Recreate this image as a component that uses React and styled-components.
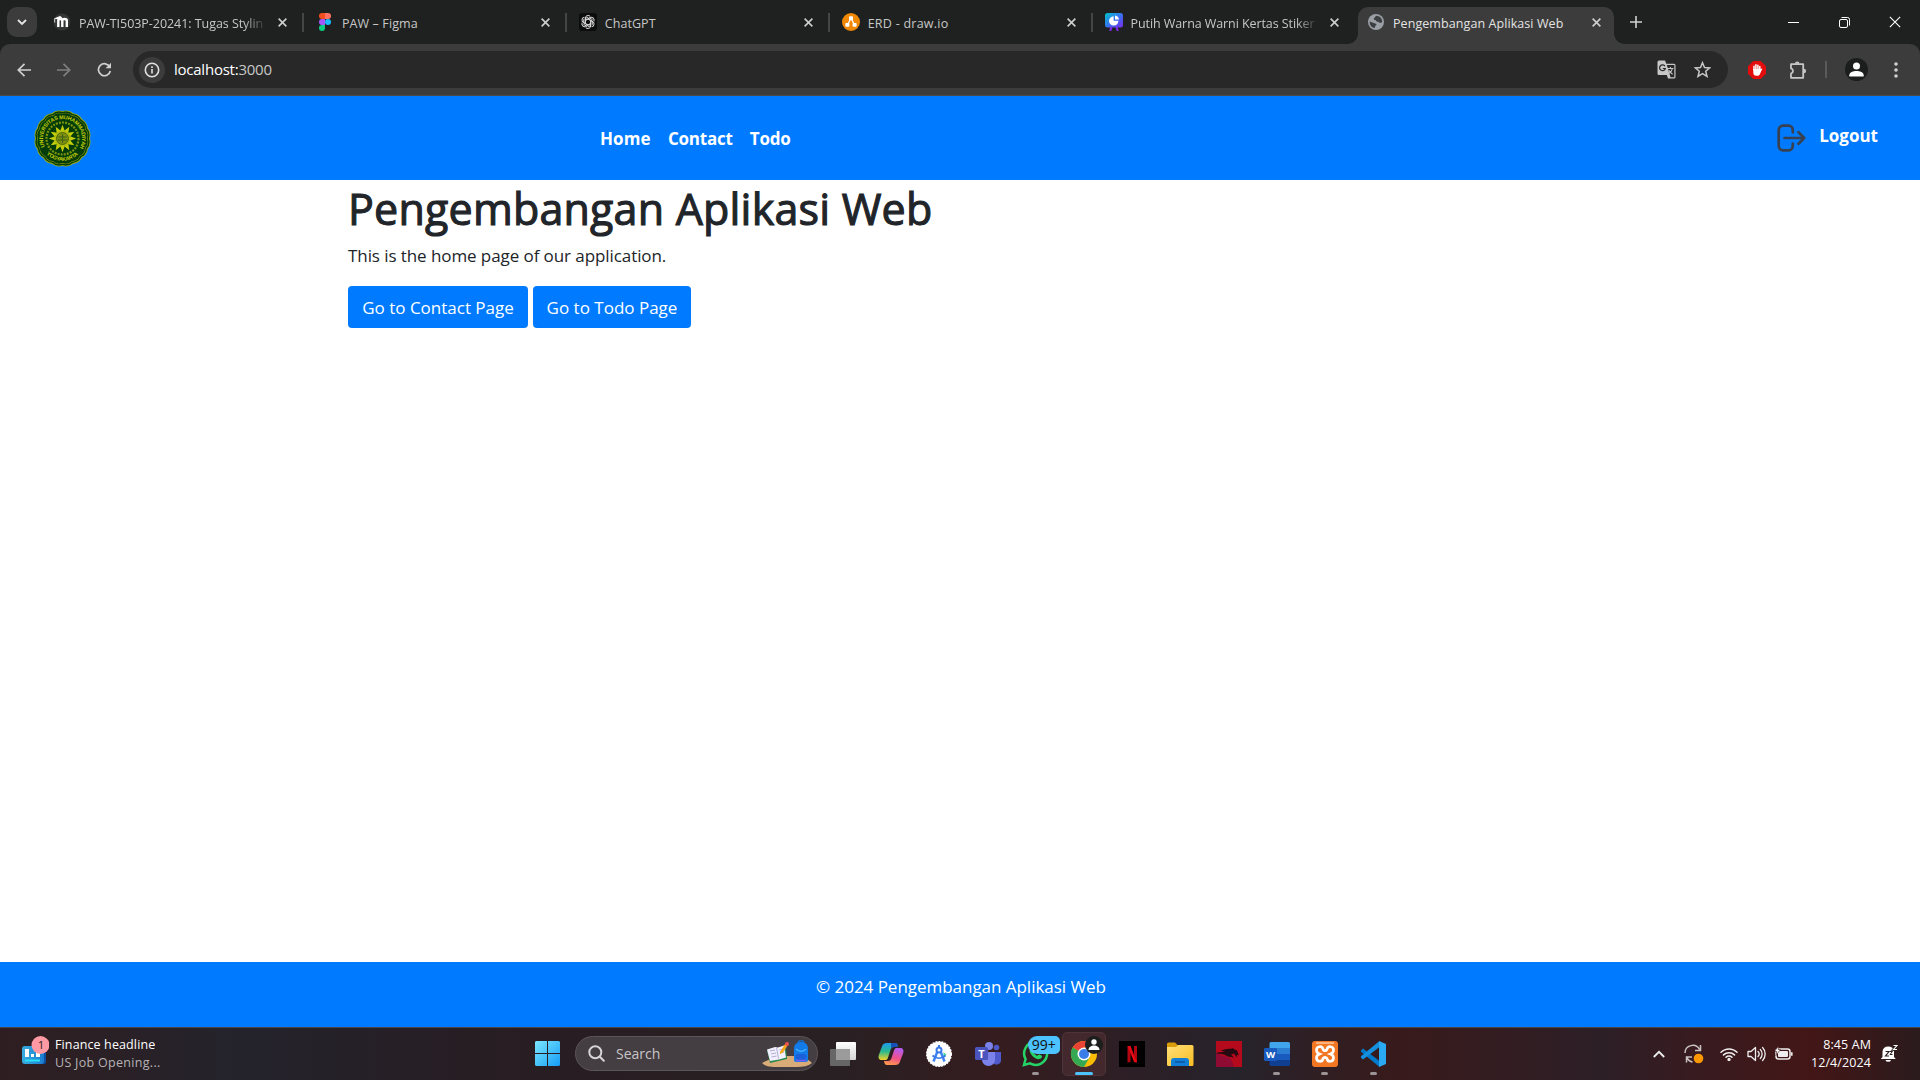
import React from "react";
import styled, { createGlobalStyle, css } from "styled-components";

const GlobalStyle = createGlobalStyle`
  * { box-sizing: border-box; }
  body { margin: 0; background: #fff; overflow: hidden; }
  body, button { font-family: "Open Sans", "Noto Sans", sans-serif; }
  svg { display: block; flex: none; }
`;

const Screen = styled.div`
  width: 1920px;
  height: 1080px;
  display: flex;
  flex-direction: column;
  overflow: hidden;
`;

/* ---------- Browser chrome ---------- */

const TabStrip = styled.div`
  height: 44px;
  flex: none;
  background: #1f2120;
  display: flex;
  align-items: flex-start;
  padding: 7px 0 0 7px;
`;

const TabSearch = styled.div`
  width: 30px;
  height: 30px;
  border-radius: 10px;
  background: #3c3c3c;
  display: flex;
  align-items: center;
  justify-content: center;
  margin-right: 4px;
`;

const Tab = styled.div`
  width: 262.9px;
  height: 30px;
  display: flex;
  align-items: center;
  padding-left: 12px;
  color: #c7c7c7;
  border-right: 2px solid ${(p) => (p.$last ? "transparent" : "#444645")};
  border-image: ${(p) =>
    p.$last
      ? "none"
      : "linear-gradient(transparent 23%, #444645 23%, #444645 80%, transparent 80%) 1"};
`;

const ActiveTab = styled.div`
  width: 256px;
  height: 37px;
  margin-left: 2.5px;
  padding: 0 0 7px 9px;
  border-radius: 10px 10px 0 0;
  background: #3c3c3c;
  color: #e3e3e3;
  display: flex;
  align-items: center;
  position: relative;
  &::before,
  &::after {
    content: "";
    position: absolute;
    bottom: 0;
    width: 10px;
    height: 10px;
  }
  &::before {
    left: -10px;
    background: radial-gradient(circle at 0 0, transparent 9.5px, #3c3c3c 10px);
  }
  &::after {
    right: -10px;
    background: radial-gradient(circle at 100% 0, transparent 9.5px, #3c3c3c 10px);
  }
`;

const Favicon = styled.div`
  width: 18px;
  height: 18px;
  display: flex;
  align-items: center;
  justify-content: center;
  margin-right: 8px;
`;

const TabTitle = styled.div`
  width: 189px;
  font-size: 12.5px;
  line-height: 20px;
  letter-spacing: ${(p) => p.$ls || 0}px;
  white-space: nowrap;
  overflow: hidden;
  padding-top: 3px;
  ${(p) =>
    p.$fade &&
    css`
      mask-image: linear-gradient(to right, #000 165px, transparent 188px);
    `}
`;

const CloseSlot = styled.div`
  width: 20px;
  margin-left: 4.5px;
  display: flex;
  justify-content: center;
`;

const NewTab = styled.div`
  height: 30px;
  width: 30px;
  margin-left: 7px;
  display: flex;
  align-items: center;
  justify-content: center;
`;

const WindowControls = styled.div`
  display: flex;
  height: 30px;
  margin-left: auto;
  align-items: center;
`;

const ControlSlot = styled.div`
  width: 50.5px;
  display: flex;
  justify-content: center;
`;

const ToolbarWrap = styled.div`
  background: #1f2120;
  flex: none;
`;

const Toolbar = styled.div`
  height: 52px;
  background: #3c3c3c;
  border-radius: 10px 10px 0 0;
  border-bottom: 1px solid #4a4a4a;
  display: flex;
  align-items: center;
  padding-left: 4px;
`;

const ToolSlot = styled.div`
  width: ${(p) => p.$w || 40}px;
  flex: none;
  display: flex;
  align-items: center;
  justify-content: center;
  opacity: ${(p) => (p.$dim ? 0.45 : 1)};
`;

const Omnibox = styled.div`
  width: 1595px;
  flex: none;
  height: 37px;
  margin-left: 9px;
  border-radius: 19px;
  background: #282828;
  display: flex;
  align-items: center;
  padding: 0 8px 0 6px;
`;

const InfoChip = styled.div`
  width: 26px;
  height: 26px;
  border-radius: 50%;
  background: #3c3c3c;
  display: flex;
  align-items: center;
  justify-content: center;
`;

const Address = styled.div`
  margin-left: 9px;
  flex: 1;
  font-size: 15px;
  line-height: 20px;
  padding-bottom: 1px;
  letter-spacing: -0.24px;
  color: #fff;
  span { color: #c7c7c7; }
`;

const Divider = styled.div`
  width: 2px;
  height: 17px;
  background: #5a5a5a;
`;

/* ---------- Web page ---------- */

const Navbar = styled.nav`
  height: 84px;
  flex: none;
  background: #007bff;
  display: flex;
  align-items: center;
  justify-content: space-between;
  padding: 0 42px 0 34px;
`;

const NavLinks = styled.div`
  display: flex;
  gap: 17.3px;
  margin-right: auto;
  margin-left: 509px;
  padding-top: 2px;
`;

const NavLink = styled.a`
  color: #fff;
  font-weight: 700;
  font-size: 17px;
  line-height: 26px;
  letter-spacing: ${(p) => p.$ls || 0}px;
  white-space: nowrap;
`;

const LogoutGroup = styled.div`
  display: flex;
  align-items: center;
  gap: 13px;
  ${NavLink} { margin-top: -4px; }
`;

const Content = styled.main`
  flex: 1;
  min-height: 0;
  padding: 0 348px;
  background: #fff;
  color: #212529;
`;

const Title = styled.h1`
  margin: 2px 0 8px;
  font-size: 43px;
  line-height: 53px;
  font-weight: 500;
  letter-spacing: 0.2px;
  -webkit-text-stroke: 1.1px #212529;
  white-space: nowrap;
`;

const Lead = styled.p`
  margin: 0 0 17px;
  font-size: 17px;
  line-height: 26px;
  letter-spacing: -0.08px;
`;

const ButtonRow = styled.div`
  display: flex;
  gap: 5px;
`;

const PageButton = styled.button`
  width: ${(p) => p.$w}px;
  height: 42px;
  border: 0;
  border-radius: 4px;
  background: #007bff;
  color: #fff;
  font-size: 17px;
  padding: 0;
  white-space: nowrap;
`;

const Footer = styled.footer`
  height: 65px;
  flex: none;
  background: #007bff;
  color: #fff;
  text-align: center;
  padding: 12px 0 0 2px;
  font-size: 17px;
  line-height: 26px;
  letter-spacing: -0.03px;
`;

/* ---------- Taskbar ---------- */

const Taskbar = styled.div`
  height: 53px;
  flex: none;
  display: flex;
  align-items: center;
  padding-bottom: 1px;
  border-top: 1px solid #4b4348;
  background: linear-gradient(
    to right,
    #2f1e21 0, #2a2025 100px, #24232c 240px, #261f26 400px, #281d22 540px,
    #282023 830px, #351c1f 1000px, #2d1f25 1120px, #27232b 1240px,
    #381a1b 1400px, #2d1f27 1600px, #431616 1810px, #2b1b1d 1920px
  );
  color: #fff;
`;

const Widget = styled.div`
  width: 535px;
  display: flex;
  padding-left: 21px;
  gap: 6px;
  align-items: center;
  svg { margin-top: -5px; }
`;

const WidgetText = styled.div`
  font-size: 12.5px;
  line-height: 18px;
  white-space: nowrap;
  letter-spacing: 0.12px;
  padding-top: 1px;
  div + div { color: #b7b3b5; letter-spacing: 0.3px; }
`;

const SearchBox = styled.div`
  width: 243px;
  height: 35px;
  margin-left: 15px;
  margin-right: 1px;
  border-radius: 18px;
  background: #443d41;
  border: 1px solid #5b5558;
  display: flex;
  align-items: center;
  padding: 0 5px 0 12px;
  color: #c9c6c8;
  font-size: 14px;
  letter-spacing: 0;
  span { margin-left: 11px; flex: 1; padding-bottom: 1px; }
`;

const AppSlot = styled.div`
  width: 48.2px;
  height: 44px;
  flex: none;
  display: flex;
  align-items: center;
  justify-content: center;
  position: relative;
`;

const AppTile = styled.div`
  width: 44px;
  height: 44px;
  border-radius: 5px;
  background: #43292d;
  border: 1px solid #4c3438;
  display: flex;
  align-items: center;
  justify-content: center;
`;

const Indicator = styled.div`
  position: absolute;
  bottom: 1px;
  width: ${(p) => (p.$active ? 18 : 7)}px;
  height: 3px;
  border-radius: 2px;
  background: ${(p) => (p.$active ? "#4cc2ff" : "#9b9396")};
`;

const CountBadge = styled.div`
  position: absolute;
  left: 16px;
  top: 4px;
  width: 32px;
  height: 18px;
  border-radius: 9px 5px 5px 9px;
  background: #4cc2ff;
  color: #111;
  font-size: 14px;
  line-height: 18px;
  text-align: center;
`;

const Tray = styled.div`
  margin-left: auto;
  margin-right: 22px;
  display: flex;
  align-items: center;
`;

const TraySlot = styled.div`
  margin-right: ${(p) => p.$gap}px;
`;

const Clock = styled.div`
  width: 66px;
  margin-right: 9px;
  font-size: 12.5px;
  line-height: 18px;
  text-align: right;
  white-space: nowrap;
  padding-top: 1px;
  letter-spacing: 0.1px;
`;

/* ---------- Icons ---------- */

const Cross = ({ size = 9, color = "#d0d0d0", w = 1.7 }) => (
  <svg width={size} height={size} viewBox="0 0 10 10" stroke={color} strokeWidth={w}>
    <path d="M.7 .7 9.3 9.3M9.3 .7 .7 9.3" />
  </svg>
);

const MoodleIcon = () => (
  <svg width="18" height="18" viewBox="0 0 18 18">
    <circle cx="9" cy="9" r="8.5" fill="#343535" />
    <path d="M5.300 14V7.500c0-2 4-2 4 0V14m0-6.500c0-2 4.500-2 4.500 0V14" fill="none" stroke="#fff" strokeWidth="2.400" />
    <path d="M1 5.600 7 3l2.500 1.500L4 6.200z" fill="#fff" />
    <path d="M1.700 5.500v4" stroke="#fff" strokeWidth=".8" />
  </svg>
);

const FigmaIcon = () => (
  <svg width="12" height="18" viewBox="0 0 12 18">
    <path d="M3 0h3v6H3a3 3 0 0 1 0-6z" fill="#f24e1e" />
    <path d="M6 0h3a3 3 0 0 1 0 6H6z" fill="#ff7262" />
    <path d="M3 6h3v6H3a3 3 0 0 1 0-6z" fill="#a259ff" />
    <circle cx="9" cy="9" r="3" fill="#1abcfe" />
    <path d="M3 12h3v3a3 3 0 1 1-3-3z" fill="#0acf83" />
  </svg>
);

const ChatIcon = () => (
  <svg width="18" height="18" viewBox="0 0 18 18">
    <rect width="18" height="18" rx="3" fill="#0c0c0c" />
    <g fill="none" stroke="#d8d8d8" strokeWidth="1">
      {[0, 60, 120, 180, 240, 300].map((a) => (
        <path key={a} transform={`rotate(${a} 9 9)`} d="M6.300 10.500V5a2.800 2.800 0 0 1 5-1.500M6.300 7.500 10.600 5l3 1.700" />
      ))}
    </g>
  </svg>
);

const DrawIcon = () => (
  <svg width="18" height="18" viewBox="0 0 18 18">
    <circle cx="9" cy="9" r="9" fill="#f08705" />
    <path d="M9 5 5.500 12M9 5l3.500 7" stroke="#fff" strokeWidth="1.300" />
    <rect x="7" y="3.200" width="4" height="4" rx=".8" fill="#fff" />
    <rect x="3.400" y="10" width="4" height="3.800" rx=".8" fill="#fff" />
    <rect x="10.600" y="10" width="4" height="3.800" rx=".8" fill="#fff" />
  </svg>
);

const SlidesIcon = () => (
  <svg width="18" height="18" viewBox="0 0 18 18">
    <defs>
      <linearGradient id="slides" x1="0" y1="0" x2="1" y2="1">
        <stop offset="0" stopColor="#00c4cc" />
        <stop offset=".55" stopColor="#3a6df0" />
        <stop offset="1" stopColor="#7d2ae8" />
      </linearGradient>
    </defs>
    <rect width="18" height="14.500" rx="2.500" fill="url(#slides)" />
    <path d="m6.500 14-1.300 4M11.500 14l1.300 4" stroke="#7d2ae8" strokeWidth="2.200" />
    <path d="M8.600 3.200v4.600h4.800A4.700 4.700 0 1 1 8.600 3.200z" fill="#fff" />
    <path d="M10 2.500a4.600 4.600 0 0 1 4 4h-4z" fill="#fff" />
  </svg>
);

const GlobeIcon = () => (
  <svg width="16" height="16" viewBox="0 0 16 16">
    <circle cx="8" cy="8" r="8" fill="#9aa0a6" />
    <path d="M8.800 1.700c-2 .3-1.500 1.600-2.600 2.200-.8.500-.4 1.800.700 2 1.400.2 1.200 1.800 2.600 1.800 1.500 0 1.600 1.200 2.800 1.200l2-.8C14.500 4.800 12 2 8.800 1.700zM1.700 7.500l4.800 1.800c1 .5 2 .3 2 1.300s-1.500 1-1.500 2.200l-.2 1.300C3.700 13.700 1.400 11 1.700 7.500z" fill="#3c4043" />
  </svg>
);

const Arrow = ({ flip }) => (
  <svg width="14" height="14" viewBox="0 0 14 14" fill="none" stroke="#d0d0d0" strokeWidth="1.700" transform={flip ? "scale(-1 1)" : undefined}>
    <path d="M14 7H1.500M7.500 .8 1.300 7l6.200 6.200" />
  </svg>
);

const ReloadIcon = () => (
  <svg width="15" height="15" viewBox="0 0 15 15">
    <path d="M12.800 5A6 6 0 1 0 13.300 9" fill="none" stroke="#d0d0d0" strokeWidth="1.700" />
    <path d="M14 .8v5.500H8.500l1.900-1.900 1.800-1.700z" fill="#d0d0d0" />
  </svg>
);

const InfoIcon = () => (
  <svg width="16" height="16" viewBox="0 0 16 16" fill="none" stroke="#e0e0e0" strokeWidth="1.600">
    <circle cx="8" cy="8" r="6.700" />
    <path d="M8 7v4.400M8 4.300v1.700" />
  </svg>
);

const TranslateIcon = () => (
  <svg width="19" height="19" viewBox="0 0 19 19">
    <path d="M2 .5h6l1.300 3.300H17a1.500 1.500 0 0 1 1.500 1.500v11.700a1.500 1.500 0 0 1-1.500 1.500h-6L9.800 15H2A1.500 1.500 0 0 1 .5 13.500V2A1.500 1.500 0 0 1 2 .5z" fill="#c7c7c7" />
    <path d="m9.800 5 3.800 12.300H17.300V5z" fill="#282828" />
    <path d="M8 6.300A2.900 2.900 0 1 0 8.300 8.500H5.800" fill="none" stroke="#282828" strokeWidth="1.200" />
    <path d="M10.500 8.500h6M13.400 7v1.500m2 0c-.4 2-2 4-3.500 4.800m0-3c.8 1.400 2.300 3 3.700 4" fill="none" stroke="#c7c7c7" strokeWidth="1.100" />
  </svg>
);

const StarIcon = () => (
  <svg width="17" height="17" viewBox="0 0 17 17" fill="none" stroke="#c7c7c7" strokeWidth="1.500">
    <path d="m8.500 1.700 2 4.800 5.200.4-4 3.400 1.300 5.100-4.500-2.800L4 15.400l1.300-5.100-4-3.400 5.200-.4z" />
  </svg>
);

const BlockIcon = () => (
  <svg width="18" height="18" viewBox="0 0 18 18">
    <path d="M5.300 0h7.400L18 5.300v7.400L12.700 18H5.300L0 12.700V5.300z" fill="#e40d0d" />
    <path d="M6 9V5.300M7.900 8V3.800M9.900 8V4.200M11.800 9V5.600" stroke="#fff" strokeWidth="1.500" strokeLinecap="round" />
    <path d="M5.300 8h7.200l1.300-.6c.5 0 .5.500.2 1l-2.300 5c-.4.900-1 1.400-2.200 1.400H8.200c-1.800 0-2.900-1.300-2.900-3z" fill="#fff" />
  </svg>
);

const PuzzleIcon = () => (
  <svg width="19" height="20" viewBox="0 0 19 20">
    <path d="M2 4.200h12.200v13.600H2v-4.200a2.700 2.700 0 0 0 0-5.200z" fill="none" stroke="#c7c7c7" strokeWidth="1.800" strokeLinejoin="round" />
    <path d="M5.900 3.800a2.300 2.300 0 0 1 4.600 0zM14.800 8.700a2.300 2.300 0 0 1 0 4.600z" fill="#c7c7c7" />
  </svg>
);

const PersonBadge = ({ r = 11.5 }) => (
  <svg width={r * 2} height={r * 2} viewBox="0 0 23 23">
    <circle cx="11.500" cy="11.500" r="11.500" fill="#1c1d1d" />
    <circle cx="11.500" cy="8" r="3.500" fill="#fff" />
    <path d="M4.300 18.500v-1.300c0-3 4-4.200 7.200-4.200s7.200 1.200 7.200 4.200v1.300z" fill="#fff" />
  </svg>
);

const DotsIcon = () => (
  <svg width="4" height="16" viewBox="0 0 4 16" fill="#d0d0d0">
    <circle cx="2" cy="2" r="1.800" /><circle cx="2" cy="8" r="1.800" /><circle cx="2" cy="14" r="1.800" />
  </svg>
);

const scallops = Array.from({ length: 16 }, (_, i) => ((i + 0.5) * Math.PI) / 8);
const rays = Array.from({ length: 12 }, (_, i) => i * 30);

const ScallopDisc = ({ r, fill }) => (
  <g fill={fill}>
    {scallops.map((a) => (
      <circle key={a} cx={28.5 + 17.5 * Math.cos(a)} cy={28.5 + 17.5 * Math.sin(a)} r={r} />
    ))}
    <circle cx="28.500" cy="28.500" r="20" />
  </g>
);

const UniversityLogo = () => (
  <svg width="57" height="57" viewBox="0 0 57 57">
    <defs>
      <path id="ringTop" d="M10.700 36.500a19.500 19.500 0 1 1 35.600 0" />
      <path id="ringBottom" d="M11.500 43a22.300 22.300 0 0 0 34 0" />
    </defs>
    <ScallopDisc r={10.8} fill="#9aab12" />
    <ScallopDisc r={10} fill="#033c08" />
    <ScallopDisc r={8.600} fill="#7b9010" />
    <ScallopDisc r={8} fill="#033c08" />
    <g fill="#c2cc0c" fontFamily="Liberation Sans, sans-serif" fontWeight="700" fontSize="5.400">
      <text><textPath href="#ringTop" textLength="79">UNIVERSITAS MUHAMMADIYAH</textPath></text>
      <text><textPath href="#ringBottom" startOffset="1.500" textLength="35">YOGYAKARTA</textPath></text>
    </g>
    <circle cx="28.500" cy="28.500" r="16" fill="none" stroke="#a3b010" strokeWidth="2.200" strokeDasharray="2 1.100" opacity=".75" />
    {rays.map((a) => (
      <path key={a} d="M26.200 21 28.500 14.800l2.300 6.200z" fill="#c6ce0b" transform={`rotate(${a} 28.500 28.500)`} />
    ))}
    <circle cx="28.500" cy="28.500" r="8" fill="#b5bf0c" />
    <circle cx="28.500" cy="28.500" r="6" fill="#7f9012" stroke="#4e6b0c" />
    <path d="M24.500 27h8M24 30h9M28.500 24v9" stroke="#3f6010" strokeWidth="1" />
  </svg>
);

const LogoutIcon = () => (
  <svg width="29" height="28" viewBox="0 0 29 28" fill="none" stroke="#374151" strokeWidth="2.700" strokeLinecap="round" strokeLinejoin="round">
    <path d="M15.800 8.500V6a4.300 4.300 0 0 0-4.300-4.300H6A4.300 4.300 0 0 0 1.700 6v16A4.300 4.300 0 0 0 6 26.300h5.500a4.300 4.300 0 0 0 4.300-4.300v-2.500M7.500 14h19.300M21.500 8.300l5.700 5.700-5.700 5.700" />
  </svg>
);

const WidgetIcon = () => (
  <svg width="28" height="30" viewBox="0 0 28 30">
    <defs>
      <linearGradient id="widget" x1="0" x2="1"><stop stopColor="#35aede" /><stop offset="1" stopColor="#1c7cd0" /></linearGradient>
    </defs>
    <rect x="19" y="11" width="6" height="17" rx="2" fill="#0b4fa0" />
    <rect x="1" y="10" width="22" height="18" rx="3" fill="url(#widget)" />
    <path d="M4 13h4v8H4zM10 18h3v3h-3zM15 15h4v6h-4z" fill="#fff" />
    <path d="M4 24.500h15" stroke="#29e1f5" strokeWidth="2" />
    <circle cx="19.500" cy="9" r="9" fill="#ff99a4" />
    <text x="20" y="13" textAnchor="middle" fontSize="11.500" fill="#222" fontFamily="Open Sans">1</text>
  </svg>
);

const StartIcon = () => (
  <svg width="25" height="25" viewBox="0 0 25 25">
    <defs><linearGradient id="win" x1="0" y1="0" x2="1" y2="1"><stop stopColor="#7ce8ff" /><stop offset="1" stopColor="#159cf5" /></linearGradient></defs>
    <path d="M1 0h11v12H0V1zM13 0h11l1 1v11H13zM0 13h12v12H1l-1-1zM13 13h12v11l-1 1H13z" fill="url(#win)" />
  </svg>
);

const SearchIcon = () => (
  <svg width="17" height="17" viewBox="0 0 17 17" fill="none" stroke="#d6d4d5" strokeWidth="2" strokeLinecap="round">
    <circle cx="7.300" cy="7.300" r="6" /><path d="m11.800 11.800 4 4" />
  </svg>
);

const SchoolIllustration = () => (
  <svg width="50" height="28" viewBox="0 0 50 28">
    <path d="M0 23c8-4 14-7 22-7h18c4 2 7 4 10 7-4 3-9 4-15 4H14C7 27 3 26 0 23z" fill="#d8ab78" />
    <path d="m5 11 19-3 1 11-17 4z" fill="#2c8a4a" />
    <path d="m5 9.500 8-2.500 3 .5 6-2 2 12-7 2-9 1.500z" fill="#f2f0ff" />
    <path d="m14.500 7.500 2 11M8 11l5-1M9 14l5-1M17.500 10l3-1M18 13l4-1M9.500 17l5-1" stroke="#aaa4c8" strokeWidth=".9" />
    <path d="m18 12 5-8 2.500 1.500-4.500 7-3 1.500z" fill="#f9a61a" /><circle cx="25" cy="4" r="2" fill="#ef5350" />
    <path d="M36 3.500c0-4 6-4 6 0" stroke="#1769c2" strokeWidth="1.500" fill="none" />
    <path d="M32 9c0-5 3-7 7-7s7 2 7 7v11a2 2 0 0 1-2 2H34a2 2 0 0 1-2-2z" fill="#137be8" />
    <rect x="33.500" y="14" width="11" height="6" rx="3" fill="#1b5fd9" />
    <path d="M34 9c3 3 7 3 10 0" stroke="#47b8ff" strokeWidth="1.300" fill="none" />
    <path d="M34 20.500h10" stroke="#7c5cf0" strokeWidth="1.600" />
  </svg>
);

const TaskViewIcon = () => (
  <svg width="28" height="24" viewBox="0 0 28 24">
    <defs><linearGradient id="tv" x1="0" y1="0" x2="0" y2="1"><stop stopColor="#fff" /><stop offset="1" stopColor="#d5d5d5" /></linearGradient></defs>
    <rect x="1" y="7" width="20" height="17" rx="1" fill="#666" />
    <rect x="7" y="0" width="20" height="18" rx="1" fill="url(#tv)" />
    <path d="M7 7h14v11H7z" fill="#9b9b9b" />
  </svg>
);

const CopilotIcon = () => (
  <svg width="26" height="24" viewBox="0 0 26 24">
    <defs>
      <linearGradient id="cpA" x1="0" y1="0" x2="0" y2="1"><stop stopColor="#1f9bf0" /><stop offset=".5" stopColor="#2ab98c" /><stop offset="1" stopColor="#f5d22a" /></linearGradient>
      <linearGradient id="cpB" x1=".6" y1="0" x2=".3" y2="1"><stop stopColor="#b35cf0" /><stop offset=".55" stopColor="#f0508a" /><stop offset="1" stopColor="#ff9a4a" /></linearGradient>
    </defs>
    <path d="M9 1h8c2 0 2.500 1.500 3 4h-4c-2 0-3 1-3.500 3L10 15.500C9.500 17.500 8.500 18 7 18H4c-3 0-4-2-3.200-5L3.800 5C4.800 2 6 1 9 1z" fill="url(#cpA)" />
    <path d="M13 1h4c2 0 2.500 1.500 3 4h-4c-1.500 0-2.500.6-3 2z" fill="#1450b8" />
    <path d="M17 23H9c-2 0-2.500-1.500-3-4h4c2 0 3-1 3.500-3L16 8.500C16.500 6.500 17.500 6 19 6h3c3 0 4 2 3.200 5l-3 8c-1 3-2.200 4-5.200 4z" fill="url(#cpB)" />
  </svg>
);

const StudioIcon = () => (
  <svg width="26" height="26" viewBox="0 0 26 26">
    <circle cx="13" cy="13" r="12.300" fill="#fff" stroke="#fff" strokeWidth="1.400" strokeDasharray="2 1" />
    <path d="m17.500 11 3 3-3 2z" fill="#3ddc84" />
    <path d="M12 9 7.500 20.500M14 9l4.500 11.500" fill="none" stroke="#4285f4" strokeWidth="2.500" />
    <path d="M6.500 14.500c4 3.500 9 3.500 13 0" fill="none" stroke="#3b78e7" strokeWidth="1.800" />
    <circle cx="13" cy="9" r="2.500" fill="#fff" stroke="#3b78e7" strokeWidth="2" />
    <path d="M13 4v3" stroke="#3b78e7" strokeWidth="2" />
  </svg>
);

const TeamsIcon = () => (
  <svg width="26" height="24" viewBox="0 0 26 24">
    <circle cx="21.500" cy="5.500" r="2.800" fill="#5059c9" /><circle cx="14" cy="4" r="4" fill="#7b83eb" />
    <path d="M17 10h9v7a4.500 4.500 0 0 1-9 2z" fill="#5059c9" />
    <path d="M7 10h13v8a6.500 6 0 0 1-13 0z" fill="#7b83eb" />
    <rect x="0" y="5" width="13" height="13" rx="1.500" fill="#4b53bc" />
    <text x="6.500" y="15.500" textAnchor="middle" fontSize="11" fontWeight="700" fill="#fff" fontFamily="Open Sans">T</text>
  </svg>
);

const WhatsappIcon = () => (
  <svg width="27" height="27" viewBox="0 0 27 27">
    <path d="m2 25 1.600-6A11.500 11.500 0 1 1 8 23.400z" fill="none" stroke="#25d366" strokeWidth="2.500" />
    <path d="M9.300 7.800c.6-.7 1.500-.5 1.800.2l.9 2c.2.700-.1 1.200-.9 2 1.100 1.900 2.300 3 4.300 3.800.9-1.100 1.300-1.700 2.100-1.300l2 1c.8.400.6 1.300.2 2.100-.8 1.500-2.900 2-4.700 1.400C11.400 17.700 8.700 14.800 7.700 11.600c-.3-1.300.6-3 1.600-3.800z" fill="#25d366" />
  </svg>
);

const ChromeIcon = () => (
  <svg width="30" height="30" viewBox="-2 0 30 30" overflow="visible">
    <circle cx="13" cy="15" r="13" fill="#fbbc04" />
    <path d="M13 15 1.700 8.500A13 13 0 0 1 24.300 8.500H13z" fill="#ea4335" />
    <path d="M1.700 8.500A13 13 0 0 0 13 28l5.600-9.800L13 15z" fill="#34a853" />
    <path d="M13 8.500h11.300L18.600 18.200z" fill="#fbbc04" />
    <circle cx="13" cy="15" r="6.500" fill="#fff" /><circle cx="13" cy="15" r="5" fill="#3b7de8" />
    <circle cx="23" cy="6" r="9" fill="#1c1d1d" /><circle cx="23" cy="3" r="2.700" fill="#fff" />
    <path d="M17.500 11c0-6 11-6 11 0z" fill="#fff" />
  </svg>
);

const NetflixIcon = () => (
  <svg width="26" height="26" viewBox="0 0 26 26">
    <rect width="26" height="26" fill="#000" />
    <path d="M8.500 5h3v16l-3 .5zM15 5h3v16.500l-3-.5z" fill="#b20710" />
    <path d="M8.500 5h3L18 21.500l-3-.5z" fill="#e50914" />
  </svg>
);

const FolderIcon = () => (
  <svg width="28" height="26" viewBox="0 0 28 26">
    <defs><linearGradient id="fold" x1="0" y1="0" x2="1" y2="1"><stop stopColor="#ffe07a" /><stop offset="1" stopColor="#f9bd21" /></linearGradient></defs>
    <path d="M1 3a1.500 1.500 0 0 1 1.500-1.500H9l3 3v4H1z" fill="#d99c0a" />
    <path d="M1 6h9l2-2h14a1.500 1.500 0 0 1 1.500 1.500V23.500A1.500 1.500 0 0 1 26 25H2.500A1.500 1.500 0 0 1 1 23.500z" fill="url(#fold)" />
    <path d="M5 25V20a3 3 0 0 1 3-3h12a3 3 0 0 1 3 3v5z" fill="#127fd6" /><path d="M9 21h10" stroke="#0a559e" strokeWidth="1.500" />
  </svg>
);

const DragonIcon = () => (
  <svg width="26" height="26" viewBox="0 0 26 26">
    <rect width="26" height="26" fill="#b50a1b" />
    <path d="M0 11c5 4 9 4 14 6 2 3 3 6 4 9H0z" fill="#8f0b33" />
    <path d="M0 12c3-1 6-1 9-1L5 9.500c5-1 6-2 11-1.500l-1-1.500 6 3 2 5-2-1 0 3-3-4-3 1 3 3-6-1-4-2c-3-1-5 0-8-1.500z" fill="#250a12" />
  </svg>
);

const WordIcon = () => (
  <svg width="26" height="24" viewBox="0 0 26 24">
    <path d="M7 0h17.500A1.500 1.500 0 0 1 26 1.500V6H5.500V1.500A1.500 1.500 0 0 1 7 0z" fill="#41a5ee" />
    <path d="M5.500 6H26v6H5.500z" fill="#2b7cd3" /><path d="M5.500 12H26v6H5.500z" fill="#185abd" />
    <path d="M5.500 18H26v4.500a1.500 1.500 0 0 1-1.500 1.500H7a1.500 1.500 0 0 1-1.500-1.500z" fill="#103f91" />
    <rect y="6" width="13" height="13" rx="1.300" fill="#185abd" />
    <text x="6.500" y="16" textAnchor="middle" fontSize="9.500" fontWeight="700" fill="#fff" fontFamily="Open Sans">W</text>
  </svg>
);

const XamppIcon = () => (
  <svg width="26" height="26" viewBox="0 0 26 26">
    <rect width="26" height="26" rx="3" fill="#f37623" /><path d="M4 2h18" stroke="#ffc79d" strokeWidth="1.500" />
    <path d="M7.500 13C5 12 4.500 11 4.500 9a3.300 3.300 0 0 1 6.500-.8c.5 1 .5 1.500 2 1.500s1.500-.5 2-1.500a3.300 3.300 0 0 1 6.500.8c0 2-.5 3-3 4 2.500 1 3 2 3 4a3.300 3.300 0 0 1-6.500.8c-.5-1-.5-1.500-2-1.500s-1.500.5-2 1.500a3.300 3.300 0 0 1-6.500-.8c0-2 .5-3 3-4z" fill="none" stroke="#fff" strokeWidth="2.700" />
  </svg>
);

const CodeIcon = () => (
  <svg width="26" height="26" viewBox="0 0 26 26">
    <path d="m1 9.300 2-1.800 16.500 12.600V26L1 10.800z" fill="#0179cb" />
    <path d="m1 16.700 2 1.800L19.500 5.900V0L1 15.200z" fill="#1490df" />
    <path d="M19 0l7 3v20l-7 3z" fill="#2aaaf2" />
  </svg>
);

const ChevronUp = () => (
  <svg width="12" height="8" viewBox="0 0 12 8" fill="none" stroke="#eee" strokeWidth="1.800"><path d="m.8 7 5.200-5.200L11.200 7" /></svg>
);

const SyncIcon = () => (
  <svg width="20" height="20" viewBox="0 0 20 20">
    <path d="M1 9A7.700 7.700 0 0 1 15.500 5.500M16.500 1v5.500H11M2.500 18.500V13H8M2.500 13.500c1.500 2.500 3 4 6 4.500" fill="none" stroke="#c9c1c2" strokeWidth="1.500" />
    <circle cx="14.500" cy="14.500" r="4.800" fill="#ff9800" />
  </svg>
);

const WifiIcon = () => (
  <svg width="18" height="14" viewBox="0 0 18 14" fill="none" stroke="#eee" strokeWidth="1.500" strokeLinecap="round">
    <path d="M1 5.300a11.300 11.300 0 0 1 16 0M3.500 7.900a7.800 7.800 0 0 1 11 0M6 10.300a4.300 4.300 0 0 1 6 0" /><circle cx="9" cy="12.500" r=".9" fill="#eee" />
  </svg>
);

const VolumeIcon = () => (
  <svg width="19" height="16" viewBox="0 0 19 16" fill="none" stroke="#eee" strokeWidth="1.300" strokeLinecap="round" strokeLinejoin="round">
    <path d="M1 5.500h3L8.500 1.500v13L4 10.500H1zM11 5.500a3.600 3.600 0 0 1 0 5M13.300 3.500a6.500 6.500 0 0 1 0 9M15.600 1.500a9.500 9.500 0 0 1 0 13" />
  </svg>
);

const BatteryIcon = () => (
  <svg width="19" height="16" viewBox="0 0 19 16">
    <rect x="2" y="3" width="14" height="10" rx="2.500" fill="none" stroke="#eee" strokeWidth="1.500" />
    <rect x="4" y="5" width="10" height="6" rx="1" fill="#eee" /><path d="M17.800 6.300v3.400" stroke="#eee" strokeWidth="1.600" />
    <path d="M4.500 0 .5 5.500h2.300L2 9.500l4.500-6H4.200z" fill="#fff" stroke="#3a191c" strokeWidth=".6" />
  </svg>
);

const BellIcon = () => (
  <svg width="18" height="19" viewBox="0 0 18 19">
    <path d="M2.500 13V7.500a5.800 5.800 0 0 1 11.500 0V13l1.800 2H.8zM5.500 16h5.500a2.800 2.300 0 0 1-5.500 0z" fill="#fff" />
    <path d="M5.500 7.500H9L5.500 12H9" fill="none" stroke="#2b1b1d" strokeWidth="1.200" />
    <path d="M13.500 1.500H17l-3.500 4H17" fill="none" stroke="#2b1b1d" strokeWidth="2.600" />
    <path d="M13.500 1.500H17l-3.500 4H17" fill="none" stroke="#fff" strokeWidth="1.100" />
    <path d="M10 7.500h2.500l-2.500 3h2.500" fill="none" stroke="#2b1b1d" strokeWidth="1" />
  </svg>
);

/* ---------- Data ---------- */

const tabs = [
  { title: "PAW-TI503P-20241: Tugas Stylin", Icon: MoodleIcon, fade: true, ls: -0.05 },
  { title: "PAW – Figma", Icon: FigmaIcon, ls: 0.12 },
  { title: "ChatGPT", Icon: ChatIcon, ls: 0.05 },
  { title: "ERD - draw.io", Icon: DrawIcon, ls: 0.25 },
  { title: "Putih Warna Warni Kertas Stiker", Icon: SlidesIcon, fade: true, ls: -0.08 },
];

const apps = [
  { name: "taskview", Icon: TaskViewIcon },
  { name: "copilot", Icon: CopilotIcon },
  { name: "studio", Icon: StudioIcon },
  { name: "teams", Icon: TeamsIcon },
  { name: "whatsapp", Icon: WhatsappIcon, running: true, count: "99+" },
  { name: "chrome", Icon: ChromeIcon, active: true },
  { name: "netflix", Icon: NetflixIcon },
  { name: "files", Icon: FolderIcon },
  { name: "dragon", Icon: DragonIcon },
  { name: "word", Icon: WordIcon, running: true },
  { name: "xampp", Icon: XamppIcon, running: true },
  { name: "code", Icon: CodeIcon, running: true },
];

export default function App() {
  return (
    <Screen>
      <GlobalStyle />
      <TabStrip>
        <TabSearch>
          <svg width="10" height="7" viewBox="0 0 10 7" fill="none" stroke="#e3e3e3" strokeWidth="1.900"><path d="m1 1 4 4 4-4" /></svg>
        </TabSearch>
        {tabs.map(({ title, Icon, fade, ls }, i) => (
          <Tab key={title} $last={i === tabs.length - 1}>
            <Favicon><Icon /></Favicon>
            <TabTitle $fade={fade} $ls={ls}>{title}</TabTitle>
            <CloseSlot><Cross /></CloseSlot>
          </Tab>
        ))}
        <ActiveTab>
          <Favicon><GlobeIcon /></Favicon>
          <TabTitle $ls={0.08}>Pengembangan Aplikasi Web</TabTitle>
          <CloseSlot><Cross /></CloseSlot>
        </ActiveTab>
        <NewTab>
          <svg width="12" height="12" viewBox="0 0 12 12" stroke="#d0d0d0" strokeWidth="1.600"><path d="M6 0v12M0 6h12" /></svg>
        </NewTab>
        <WindowControls>
          <ControlSlot>
            <svg width="11" height="11" viewBox="0 0 11 11" stroke="#fff"><path d="M0 5.500h11" /></svg>
          </ControlSlot>
          <ControlSlot>
            <svg width="11" height="11" viewBox="0 0 11 11" fill="none" stroke="#fff"><rect x=".5" y="2.500" width="8" height="8" rx="1.500" /><path d="M2.500 .5H8.500a2 2 0 0 1 2 2V8.500" /></svg>
          </ControlSlot>
          <ControlSlot><Cross size={12} color="#fff" w={0.9} /></ControlSlot>
        </WindowControls>
      </TabStrip>
      <ToolbarWrap>
        <Toolbar>
          <ToolSlot><Arrow /></ToolSlot>
          <ToolSlot $dim><Arrow flip /></ToolSlot>
          <ToolSlot><ReloadIcon /></ToolSlot>
          <Omnibox>
            <InfoChip><InfoIcon /></InfoChip>
            <Address>localhost:<span>3000</span></Address>
            <ToolSlot $w={36}><TranslateIcon /></ToolSlot>
            <ToolSlot $w={36}><StarIcon /></ToolSlot>
          </Omnibox>
          <ToolSlot $w={58}><BlockIcon /></ToolSlot>
          <ToolSlot $w={24}><PuzzleIcon /></ToolSlot>
          <ToolSlot $w={32}><Divider /></ToolSlot>
          <ToolSlot $w={29}><PersonBadge /></ToolSlot>
          <ToolSlot $w={49}><DotsIcon /></ToolSlot>
        </Toolbar>
      </ToolbarWrap>

      <Navbar>
        <UniversityLogo />
        <NavLinks>
          <NavLink $ls={0.1}>Home</NavLink>
          <NavLink $ls={-0.25}>Contact</NavLink>
          <NavLink $ls={-0.2}>Todo</NavLink>
        </NavLinks>
        <LogoutGroup>
          <LogoutIcon />
          <NavLink>Logout</NavLink>
        </LogoutGroup>
      </Navbar>
      <Content>
        <Title>Pengembangan Aplikasi Web</Title>
        <Lead>This is the home page of our application.</Lead>
        <ButtonRow>
          <PageButton $w={180}>Go to Contact Page</PageButton>
          <PageButton $w={158}>Go to Todo Page</PageButton>
        </ButtonRow>
      </Content>
      <Footer>© 2024 Pengembangan Aplikasi Web</Footer>

      <Taskbar>
        <Widget>
          <WidgetIcon />
          <WidgetText>
            <div>Finance headline</div>
            <div>US Job Opening...</div>
          </WidgetText>
        </Widget>
        <StartIcon />
        <SearchBox>
          <SearchIcon />
          <span>Search</span>
          <SchoolIllustration />
        </SearchBox>
        {apps.map(({ name, Icon, running, active, count }) => (
          <AppSlot key={name}>
            {active ? <AppTile><Icon /></AppTile> : <Icon />}
            {count && <CountBadge>{count}</CountBadge>}
            {(running || active) && <Indicator $active={active} />}
          </AppSlot>
        ))}
        <Tray>
          <TraySlot $gap={19}><ChevronUp /></TraySlot>
          <TraySlot $gap={16}><SyncIcon /></TraySlot>
          <TraySlot $gap={9}><WifiIcon /></TraySlot>
          <TraySlot $gap={8}><VolumeIcon /></TraySlot>
          <TraySlot $gap={12}><BatteryIcon /></TraySlot>
          <Clock><div>8:45 AM</div><div>12/4/2024</div></Clock>
          <TraySlot $gap={0}><BellIcon /></TraySlot>
        </Tray>
      </Taskbar>
    </Screen>
  );
}
